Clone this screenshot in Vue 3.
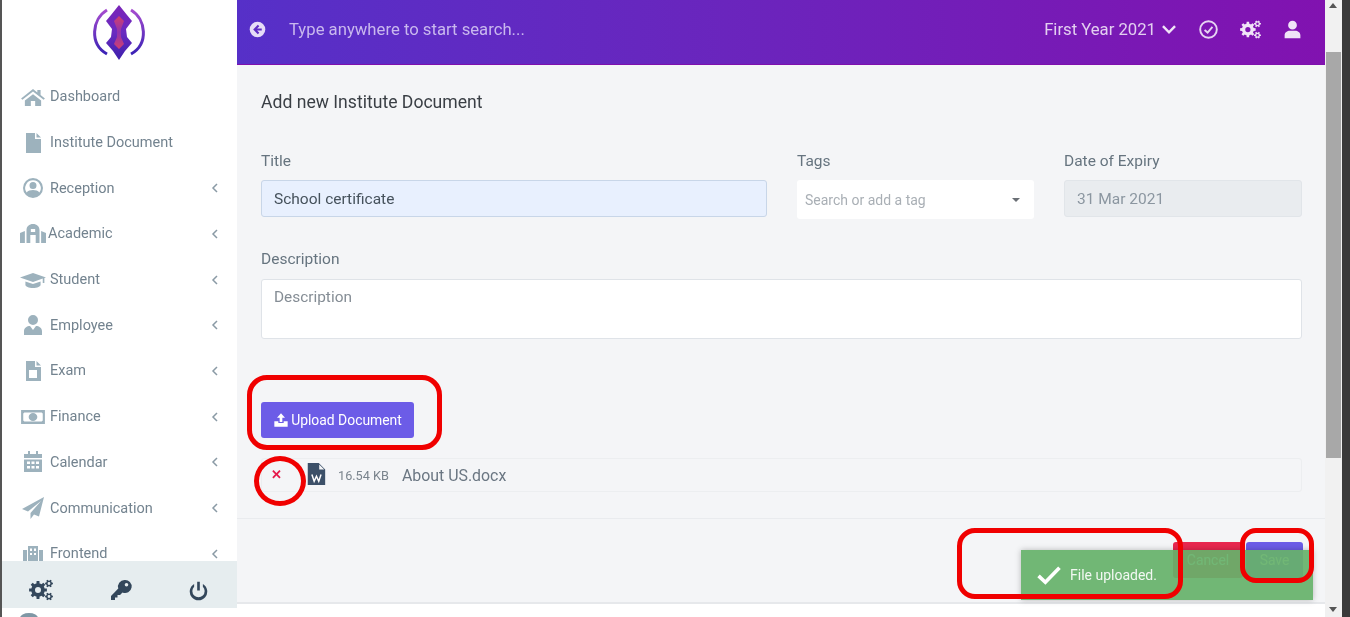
<script setup>
const menu = [
  { label: 'Dashboard', icon: 'home', wide: true },
  { label: 'Institute Document', icon: 'file' },
  { label: 'Reception', icon: 'user', arrow: true },
  { label: 'Academic', icon: 'school', arrow: true, wide: true, tight: true },
  { label: 'Student', icon: 'cap', arrow: true, wide: true },
  { label: 'Employee', icon: 'employee', arrow: true },
  { label: 'Exam', icon: 'exam', arrow: true },
  { label: 'Finance', icon: 'money', arrow: true, wide: true },
  { label: 'Calendar', icon: 'calendar', arrow: true },
  { label: 'Communication', icon: 'plane', arrow: true },
  { label: 'Frontend', icon: 'building', arrow: true }
]

// builds a gear with a round hole, used for the settings icons
function gear(cx, cy, outer, inner, hole, teeth) {
  const step = (Math.PI * 2) / teeth
  let d = ''
  for (let i = 0; i < teeth; i++) {
    const a = i * step
    const pts = [
      [inner, a - step * 0.5],
      [inner, a - step * 0.3],
      [outer, a - step * 0.2],
      [outer, a + step * 0.2],
      [inner, a + step * 0.3]
    ]
    for (const [r, t] of pts) {
      const x = (cx + r * Math.cos(t)).toFixed(2)
      const y = (cy + r * Math.sin(t)).toFixed(2)
      d += (d ? 'L' : 'M') + x + ' ' + y
    }
  }
  d += `zM${cx - hole} ${cy}a${hole} ${hole} 0 1 0 ${hole * 2} 0a${hole} ${hole} 0 1 0 ${-hole * 2} 0z`
  return d
}

const cogs = gear(9, 12, 9, 6.8, 3, 8) + gear(20, 5.5, 4, 2.9, 1.4, 6) + gear(20, 18.5, 4, 2.9, 1.4, 6)

const icons = {
  home: 'M12 4 1 13.5l1.2 1.3L12 6.6l9.8 8.2 1.2-1.3-4-3.4V5h-3v2.6zM4.5 15.5V21h5.5v-5h4v5h5.5v-5.5L12 9.2z',
  file: 'M5 2h9v6h6v14H5zM15.5 2 20 6.5h-4.5z',
  user: 'M12 2a10 10 0 1 0 0 20 10 10 0 0 0 0-20zm0 2.2a7.8 7.8 0 0 1 6.4 12.2c-1.4-1.7-3.8-2.4-6.4-2.4s-5 .7-6.4 2.4A7.8 7.8 0 0 1 12 4.2zM12 6a3.5 3.5 0 1 0 0 7 3.5 3.5 0 0 0 0-7z',
  school: 'M12 2c-3.5 0-6 2.5-6 6v13h3.5v-8h5v8H18V8c0-3.500-2.5-6-6-6zM0 11l4.5-2v12H0zm24 0-4.5-2v12H24zM10 7h4v3h-4z',
  cap: 'M12 5 0 9.5 12 14l9-3.400V15h1.500V10L24 9.500zM5 13.500V17c0 1.500 3 3 7 3s7-1.500 7-3v-3.500L12 16z',
  employee: 'M12 2a5 5 0 1 0 0 10 5 5 0 0 0 0-10zM3 22v-4c0-3 3-5 6-5l3 4 3-4c3 0 6 2 6 5v4z',
  exam: 'M5 2h9v6h6v14H5zm10.500 0L20 6.500h-4.500zM8 11v8h8v-8z',
  money: 'M1 5h22v14H1zm3 2.500a3 3 0 0 1-1 1v7a3 3 0 0 1 1 1h16a3 3 0 0 1 1-1v-7a3 3 0 0 1-1-1zM12 8a4 4 0 1 1 0 8 4 4 0 0 1 0-8z',
  calendar: 'M7 1h2v3H7zm8 0h2v3h-2zM3 4h18v4H3zm0 5.500h18V22H3zm3 2V14h3v-2.500zm4.500 0V14h3v-2.500zm4.500 0V14h3v-2.500zM6 16v2.500h3V16zm4.500 0v2.500h3V16zm4.500 0v2.500h3V16z',
  plane: 'M23 1 1 13l6 2.500L20 5 9.500 17v6l3.500-4.500 5 2z',
  building: 'M2 8h4v14H2zm16 0h4v14h-4zM7 4h10v18H7zm2 2.500V9h2V6.500zm4 0V9h2V6.500zM9 11v2h2v-2zm4 0v2h2v-2z',
  cogs,
  key: 'M15.500 2a6.500 6.500 0 0 0-6.200 8.500L2 18v4h4v-2.500h2.500V17H11l2.500-2.600A6.500 6.500 0 1 0 15.500 2zm2 3a1.800 1.800 0 1 1 0 3.600 1.800 1.800 0 0 1 0-3.600z',
  power: 'M10.500 2h3v10h-3zM7 4.500v3.300a7 7 0 1 0 10 0V4.500a10 10 0 1 1-10 0z',
  person: 'M12 2a5 5 0 1 0 0 10 5 5 0 0 0 0-10zM3 22v-3.500C3 15.500 6 13.500 9 13.500h6c3 0 6 2 6 5V22z',
  upload: 'M12 2 6 8.500h4V15h4V8.500h4zM2 14h6v2.500h8V14h6v8H2z',
  word: 'M3 0h12l7 7v17H3zm12.500 1.500V7H21z'
}
</script>

<template>
  <div class="frame">
    <aside class="sidebar">
      <div class="logo">
        <svg width="54" height="60" viewBox="0 0 54 60">
          <defs>
            <linearGradient id="arc" x1="0" y1="0" x2="0" y2="1">
              <stop offset="0" stop-color="#a64ccf" />
              <stop offset="1" stop-color="#3a22b5" />
            </linearGradient>
            <linearGradient id="lamp" x1="0" y1="0" x2="0" y2="1">
              <stop offset="0" stop-color="#7a25b8" />
              <stop offset="0.5" stop-color="#6a2bc0" />
              <stop offset="1" stop-color="#3d20ad" />
            </linearGradient>
            <linearGradient id="core" x1="0" y1="0" x2="0" y2="1">
              <stop offset="0" stop-color="#d0406e" />
              <stop offset="0.5" stop-color="#8f34b0" />
              <stop offset="1" stop-color="#d0406e" />
            </linearGradient>
          </defs>
          <path d="M15 8C0 17-3 42 15 52" fill="none" stroke="url(#arc)" stroke-width="3" />
          <path d="M39 8c15 9 18 34 0 44" fill="none" stroke="url(#arc)" stroke-width="3" />
          <path d="M27 3l8 10 5 6-6 8 1 8 5 6-7 8-6 9-6-9-7-8 5-6 1-8-6-8 5-6z" fill="url(#lamp)" />
          <path d="M27 14l5 5-3 8v8l3 7-5 5-5-5 3-7v-8l-3-8z" fill="url(#core)" />
        </svg>
      </div>
      <nav class="menu">
        <div v-for="item in menu" :key="item.label" class="menuItem">
          <svg class="menuIcon" :class="{ wideIcon: item.wide }" viewBox="0 0 24 24" :preserveAspectRatio="item.wide ? 'none' : 'xMidYMid meet'"><path :d="icons[item.icon]" fill-rule="evenodd" /></svg>
          <span class="menuLabel" :class="{ tight: item.tight }">{{ item.label }}</span>
          <svg v-if="item.arrow" class="menuArrow" viewBox="0 0 8 10"><path d="M6 1 2 5l4 4" /></svg>
        </div>
      </nav>
      <div class="sideFoot">
        <svg viewBox="0 0 24 24"><path :d="icons.cogs" fill-rule="evenodd" /></svg>
        <svg viewBox="0 0 24 24"><path :d="icons.key" fill-rule="evenodd" /></svg>
        <svg class="powerIcon" viewBox="0 0 24 24"><path :d="icons.power" fill-rule="evenodd" /></svg>
      </div>
      <div class="sideRest"><span class="peek"></span></div>
    </aside>

    <main class="main">
      <header class="topbar">
        <svg class="backIcon" viewBox="0 0 24 24">
          <circle cx="12" cy="12" r="11" fill="#e6dcf7" />
          <path d="M13.500 6.500 8 12l5.500 5.500M8.500 12H18" fill="none" stroke="#5f2cc4" stroke-width="3" />
        </svg>
        <span class="searchHint">Type anywhere to start search...</span>
        <span class="year">First Year 2021</span>
        <svg class="chev" viewBox="0 0 14 10"><path d="M1.500 2 7 7.500 12.500 2" /></svg>
        <svg class="topIcon" viewBox="0 0 24 24">
          <circle cx="12" cy="12" r="9.500" fill="none" stroke="#e6d4f2" stroke-width="2.200" />
          <path d="M7.500 12.500 11 15.500 16.500 9" fill="none" stroke="#e6d4f2" stroke-width="2.200" />
        </svg>
        <svg class="topIcon" viewBox="0 0 24 24"><path :d="icons.cogs" fill-rule="evenodd" /></svg>
        <svg class="topIcon" viewBox="0 0 24 24"><path :d="icons.person" /></svg>
      </header>

      <div class="content">
        <h4 class="pageTitle">Add new Institute Document</h4>
        <div class="fields">
          <div class="field">
            <label>Title</label>
            <div class="input filled">School certificate</div>
          </div>
          <div class="field">
            <label>Tags</label>
            <div class="input tags">
              <span>Search or add a tag</span>
              <i class="caret"></i>
            </div>
          </div>
          <div class="field">
            <label>Date of Expiry</label>
            <div class="input disabled">31 Mar 2021</div>
          </div>
        </div>
        <div class="field descField">
          <label>Description</label>
          <div class="textarea">Description</div>
        </div>
        <button class="btn upload">
          <svg viewBox="0 0 24 24"><path :d="icons.upload" fill-rule="evenodd" /></svg>
          Upload Document
        </button>
        <div class="fileRow">
          <span class="remove">✕</span>
          <svg class="wordIcon" viewBox="0 0 24 24">
            <path :d="icons.word" fill-rule="evenodd" />
            <path d="M7.500 12.500 10 20l2.500-5.500L15 20l2.500-7.500" fill="none" stroke="#fff" stroke-width="1.600" />
          </svg>
          <span class="size">16.54 KB</span>
          <span class="fileName">About US.docx</span>
        </div>
      </div>

      <footer class="actions">
        <button class="btn cancel">Cancel</button>
        <button class="btn save">Save</button>
      </footer>
      <div class="pageEnd"></div>
    </main>

    <div class="scrollbar">
      <i class="arrowUp"></i>
      <div class="thumb"></div>
      <i class="arrowDown"></i>
    </div>
    <div class="edgeRight"></div>

    <div class="toast">
      <svg viewBox="0 0 28 22"><path d="M2.500 12 10 19 25.500 3" fill="none" stroke="#fff" stroke-width="4" /></svg>
      <span>File uploaded.</span>
    </div>

    <div class="mark markUpload"></div>
    <div class="mark markRemove"></div>
    <div class="mark markToast"></div>
    <div class="mark markSave"></div>
  </div>
</template>

<style scoped>
.frame {
  position: relative;
  display: flex;
  height: 617px;
  overflow: hidden;
  background: #fff;
  border-left: 2px solid #555;
  box-sizing: border-box;
  font-family: "Roboto", "Liberation Sans", sans-serif;
  color: #5a6a7a;
  filter: blur(0.7px);
}

.sidebar {
  width: 235px;
  flex-shrink: 0;
  display: flex;
  flex-direction: column;
  background: #fff;
}

.logo {
  height: 65px;
  flex-shrink: 0;
  display: flex;
  justify-content: center;
  align-items: flex-start;
  padding-top: 2px;
  box-sizing: border-box;
  padding-right: 1px;
}

.menu {
  height: 496px;
  flex-shrink: 0;
  padding-top: 9px;
  box-sizing: border-box;
  overflow: hidden;
}

.menuItem {
  height: 45.7px;
  display: flex;
  align-items: center;
  padding-left: 19px;
  padding-right: 14px;
}

.menuIcon {
  width: 24px;
  height: 24px;
  fill: #9db2bd;
  margin-right: 5px;
  flex-shrink: 0;
}

.wideIcon {
  width: 26px;
  margin-left: -1px;
  margin-right: 4px;
}

.menuLabel {
  font-size: 14.500px;
  color: #73838f;
  position: relative;
}

.tight {
  left: -2px;
}

.menuArrow {
  width: 8px;
  height: 10px;
  margin-left: auto;
  fill: none;
  stroke: #8a9aa5;
  stroke-width: 1.500;
  margin-right: 4px;
}

.sideFoot {
  height: 47px;
  flex-shrink: 0;
  display: flex;
  align-items: center;
  justify-content: space-between;
  padding: 11px 28px 0 27px;
  box-sizing: border-box;
  background: #e6edef;
}

.sideFoot svg {
  width: 24px;
  height: 24px;
  fill: #33475b;
}

.sideFoot .powerIcon {
  width: 21px;
  height: 21px;
}

.sideRest {
  height: 9px;
  flex-shrink: 0;
  overflow: hidden;
  padding: 5px 0 0 18px;
  box-sizing: border-box;
  background: #fff;
}

.peek {
  display: block;
  width: 18px;
  height: 10px;
  border-radius: 50%;
  background: #7f97a5;
}

.main {
  width: 1088px;
  flex-shrink: 0;
  display: flex;
  flex-direction: column;
  background: #f4f5f7;
}

.topbar {
  height: 65px;
  flex-shrink: 0;
  display: flex;
  align-items: center;
  padding: 0 22px 6px 12px;
  box-sizing: border-box;
  background: linear-gradient(90deg, #5630c8 0%, #6a25bd 45%, #8112b0 100%);
  color: #e6d4f2;
  font-size: 16.700px;
  border-bottom: 1px solid #7e10ad;
}

.backIcon {
  width: 17px;
  height: 17px;
  flex-shrink: 0;
  margin-right: 23px;
}

.searchHint {
  color: #c9b8ee;
  flex: 1;
}

.year {
  color: #e3cff0;
}

.chev {
  width: 16px;
  height: 11px;
  margin-left: 5px;
  fill: none;
  stroke: #f0e4f7;
  stroke-width: 2.200;
}

.topIcon {
  width: 21px;
  height: 21px;
  fill: #f0e4f7;
  margin-left: 21px;
  flex-shrink: 0;
}

.content {
  padding: 27px 23px 0 24px;
  height: 454px;
  flex-shrink: 0;
  box-sizing: border-box;
  border-bottom: 1px solid #e9ebee;
}

.pageTitle {
  margin: 0 0 40px;
  font-size: 17.600px;
  line-height: 20px;
  font-weight: 400;
  color: #3a3f45;
}

.fields {
  display: grid;
  grid-template-columns: 506px 237px 238px;
  gap: 30px;
}

.field label {
  display: block;
  font-size: 15.500px;
  line-height: 18px;
  margin-bottom: 10px;
  color: #66747f;
}

.input {
  height: 37px;
  box-sizing: border-box;
  display: flex;
  align-items: center;
  padding: 0 12px;
  border-radius: 3px;
  font-size: 15.500px;
}

.filled {
  background: #e8f0fe;
  border: 1px solid #c8d6e8;
  color: #46525c;
}

.tags {
  margin-top: 2px;
  height: 39px;
  background: #fff;
  color: #a9afb5;
  font-size: 14px;
  padding: 0 14px 0 8px;
  justify-content: space-between;
}

.caret {
  width: 0;
  height: 0;
  border-left: 4px solid transparent;
  border-right: 4px solid transparent;
  border-top: 4px solid #6a6f75;
}

.disabled {
  background: #e9ecef;
  border: 1px solid #e1e5e9;
  color: #8b96a0;
}

.descField {
  margin-top: 31px;
}

.descField label {
  margin-bottom: 11px;
}

.textarea {
  height: 60px;
  box-sizing: border-box;
  background: #fff;
  border: 1px solid #dfe3e8;
  border-radius: 3px;
  padding: 8px 12px;
  font-size: 15.400px;
  color: #858d95;
}

.btn {
  border: none;
  border-radius: 3px;
  color: #fff;
  font-family: inherit;
  font-size: 13.900px;
  height: 36px;
}

.upload {
  margin-top: 63px;
  width: 153px;
  background: #6c5ce7;
  display: flex;
  align-items: center;
  justify-content: center;
  gap: 2px;
  padding: 0;
}

.upload svg {
  width: 16px;
  height: 16px;
  fill: #fff;
}

.fileRow {
  margin-top: 20px;
  height: 34px;
  box-sizing: border-box;
  display: flex;
  align-items: center;
  border: 1px solid #eceef0;
  border-radius: 3px;
}

.remove {
  color: #e6194b;
  font-size: 13px;
  font-weight: 700;
  width: 16px;
  margin-left: 9px;
  position: relative;
  top: -1px;
}

.wordIcon {
  width: 22px;
  height: 24px;
  fill: #3c5068;
  margin-left: 18px;
  position: relative;
  top: -1px;
}

.size {
  margin-left: 11px;
  font-size: 12.700px;
  color: #7a848d;
}

.fileName {
  margin-left: 13px;
  font-size: 15.900px;
  color: #6a7682;
}

.actions {
  flex-shrink: 0;
  height: 85px;
  display: flex;
  justify-content: flex-end;
  gap: 3px;
  padding: 23px 22px 0 0;
  box-sizing: border-box;
  border-bottom: 2px solid #e6e8eb;
}

.cancel {
  width: 70px;
  background: #e8274f;
}

.save {
  width: 57px;
  background: #6c5ce7;
}

.pageEnd {
  flex: 1;
  background: #fff;
}

.scrollbar {
  width: 17px;
  flex-shrink: 0;
  position: relative;
  background: #f1f1f1;
}

.thumb {
  position: absolute;
  top: 52px;
  left: 1px;
  right: 1px;
  height: 406px;
  background: #a8a8a8;
}

.arrowUp,
.arrowDown {
  position: absolute;
  left: 4px;
  width: 0;
  height: 0;
  border-left: 4px solid transparent;
  border-right: 4px solid transparent;
}

.arrowUp {
  top: 3px;
  border-bottom: 5px solid #555;
}

.arrowDown {
  bottom: 5px;
  border-top: 5px solid #555;
}

.edgeRight {
  flex: 1;
  background: #3a3a3a;
}

.toast {
  position: absolute;
  left: 1019px;
  top: 550px;
  width: 292px;
  height: 50px;
  display: flex;
  align-items: center;
  padding-left: 15px;
  box-sizing: border-box;
  background: rgba(102, 178, 106, 0.93);
  box-shadow: 0 0 6px rgba(0, 0, 0, 0.25);
  color: #f2f8f2;
  font-size: 14px;
}

.toast svg {
  width: 26px;
  height: 20px;
  margin-right: 8px;
  flex-shrink: 0;
}

.mark {
  position: absolute;
  box-sizing: border-box;
  border: 5px solid #f00000;
}

.markUpload {
  left: 245px;
  top: 375px;
  width: 195px;
  height: 75px;
  border-radius: 20px;
}

.markRemove {
  left: 252px;
  top: 456px;
  width: 52px;
  height: 50px;
  border-radius: 50%;
}

.markToast {
  left: 955px;
  top: 528px;
  width: 226px;
  height: 71px;
  border-radius: 18px;
}

.markSave {
  left: 1238px;
  top: 528px;
  width: 74px;
  height: 55px;
  border-radius: 16px;
}
</style>

<style>
html,
body {
  margin: 0;
  overflow: hidden;
}
</style>
